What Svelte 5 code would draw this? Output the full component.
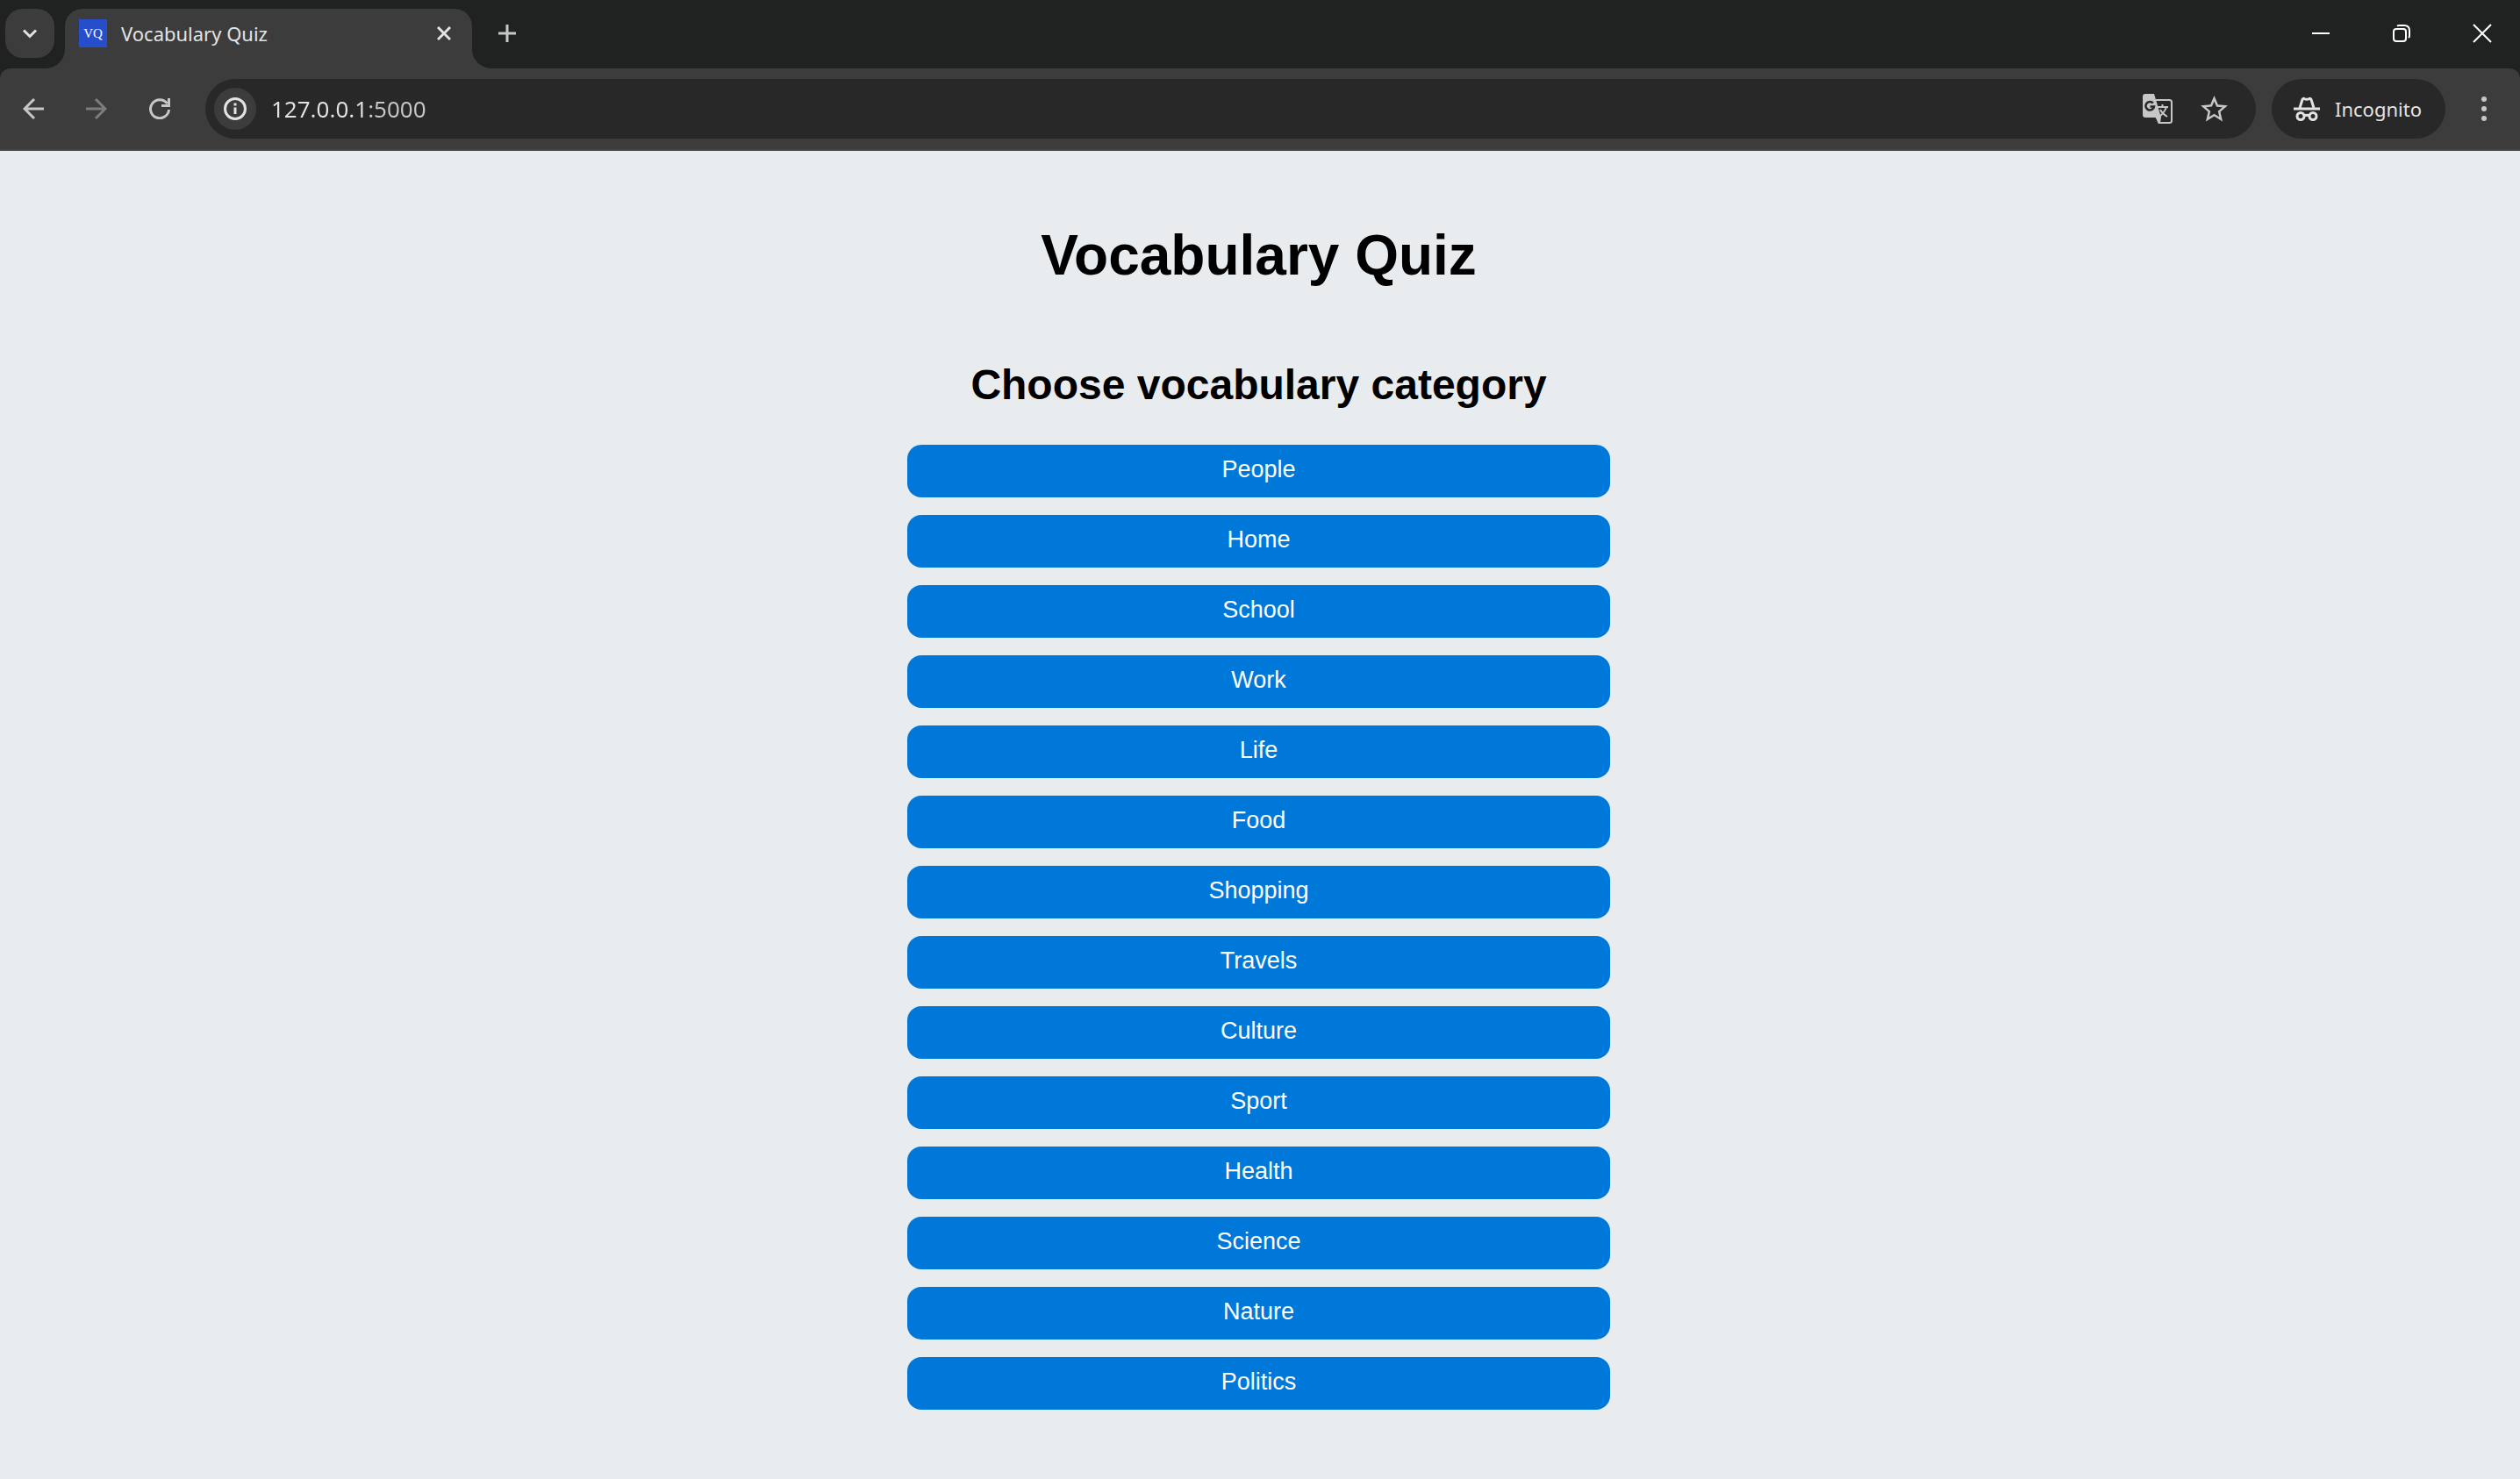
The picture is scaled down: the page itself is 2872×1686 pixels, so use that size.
<script>
  const categories = [
    'People', 'Home', 'School', 'Work', 'Life', 'Food', 'Shopping',
    'Travels', 'Culture', 'Sport', 'Health', 'Science', 'Nature', 'Politics',
  ];
</script>

<div class="window">
  <div class="chrome">
    <header class="tabs">
      <button class="search" aria-label="Search tabs">
        <svg width="20" height="20" viewBox="0 0 20 20"><path d="M3 6.5l7 7 7-7" fill="none" stroke="#e3e3e3" stroke-width="3" /></svg>
      </button>
      <div class="tab">
        <svg class="flare left" width="22" height="22" viewBox="0 0 22 22"><path d="M22 0A22 22 0 0 1 0 22H22Z" /></svg>
        <span class="favicon">VQ</span>
        <span class="tab-title">Vocabulary Quiz</span>
        <button class="close-tab" aria-label="Close tab">
          <svg width="16" height="16" viewBox="0 0 16 16"><path d="M1 1l14 14M15 1L1 15" stroke="#e3e3e3" stroke-width="3" /></svg>
        </button>
        <svg class="flare right" width="22" height="22" viewBox="0 0 22 22"><path d="M0 0A22 22 0 0 0 22 22H0Z" /></svg>
      </div>
      <button class="new-tab" aria-label="New tab">
        <svg width="20" height="20" viewBox="0 0 20 20"><path d="M10 0V20M0 10H20" stroke="#c7c7c7" stroke-width="3" /></svg>
      </button>
      <div class="controls">
        <button aria-label="Minimize"><svg width="22" height="22" viewBox="0 0 22 22"><path d="M1 11H21" stroke="#fff" stroke-width="2" /></svg></button>
        <button aria-label="Restore"><svg width="22" height="22" viewBox="0 0 22 22" fill="none" stroke="#fff" stroke-width="2"><rect x="2" y="6" width="14" height="14" rx="3" /><path d="M6 2.800Q7 2 8 2H14Q20 2 20 8V14Q20 15 19 16" /></svg></button>
        <button aria-label="Close"><svg width="22" height="22" viewBox="0 0 22 22"><path d="M1 1L21 21M21 1L1 21" stroke="#fff" stroke-width="2" /></svg></button>
      </div>
    </header>

    <nav class="toolbar">
      <button class="nav" aria-label="Back"><svg width="24" height="24" viewBox="0 0 24 24"><path d="M24 12H2M13 1L2 12l11 11" fill="none" stroke="#c7c7c7" stroke-width="3" /></svg></button>
      <button class="nav" aria-label="Forward"><svg width="24" height="24" viewBox="0 0 24 24"><path d="M0 12H22M11 1l11 11-11 11" fill="none" stroke="#7c7c7c" stroke-width="3" /></svg></button>
      <button class="nav" aria-label="Reload"><svg width="24" height="24" viewBox="0 0 24 24" fill="none" stroke="#c7c7c7" stroke-width="3"><path d="M22.500 13A10.500 10.500 0 1 1 20.500 6" /><path d="M22.500 0V8.500H14" /></svg></button>
      <div class="address">
        <button class="info" aria-label="View site information">
          <svg width="28" height="28" viewBox="0 0 28 28" fill="none" stroke="#e3e3e3" stroke-width="3"><circle cx="14" cy="14" r="11.500" /><path d="M14 12.500V20M14 7.500V10.500" /></svg>
        </button>
        <input class="url" type="text" aria-label="Address" value="127.0.0.1:5000" />
        <button aria-label="Translate this page">
          <svg width="34" height="34" viewBox="0 0 34 34">
            <path d="M15 7H30.500Q33 7 33 9.500V30.500Q33 33 30.500 33H18.500L15 25" fill="none" stroke="#c7c7c7" stroke-width="2" />
            <path d="M3 0H13L21 27H3Q0 27 0 24V3Q0 0 3 0Z" fill="#c7c7c7" />
            <path d="M14 26H21L20 33H19Z" fill="#c7c7c7" />
            <path d="M11.800 10.500A4.800 4.800 0 1 0 13 14.500H8.500" fill="none" stroke="#282828" stroke-width="2.600" />
            <path d="M17 15H29M22.500 12V15M27 15Q25 21 19 26M20 18Q22 22 28 26" fill="none" stroke="#c7c7c7" stroke-width="2" />
          </svg>
        </button>
        <button class="star" aria-label="Bookmark this tab">
          <svg width="37" height="37" viewBox="0 0 24 24"><path fill="#c7c7c7" fill-rule="evenodd" d="M22 9.240l-7.190-.620L12 2 9.190 8.630 2 9.240l5.460 4.730L5.820 21 12 17.270 18.180 21l-1.630-7.030L22 9.240zM12 15.400l-3.760 2.270 1-4.280-3.320-2.880 4.380-.380L12 6.100l1.710 4.040 4.380.380-3.320 2.880 1 4.280L12 15.400z" /></svg>
        </button>
      </div>
      <button class="incognito">
        <svg width="30" height="28" viewBox="0 0 30 28" fill="none" stroke="#e3e3e3" stroke-width="3"><path d="M0 14H30" /><path d="M7 13L10 3.500Q10.500 2 12 2.500Q15 4 18 2.500Q19.500 2 20 3.500L23 13" /><circle cx="8" cy="22.500" r="4" /><circle cx="22" cy="22.500" r="4" /><path d="M12 22Q15 20.500 18 22" /></svg>
        Incognito
      </button>
      <button class="menu" aria-label="Menu"><svg width="6" height="28" viewBox="0 0 6 28" fill="#c7c7c7"><circle cx="3" cy="3" r="3" /><circle cx="3" cy="14" r="3" /><circle cx="3" cy="25" r="3" /></svg></button>
    </nav>
  </div>

  <main>
    <h1>Vocabulary Quiz</h1>
    <h2>Choose vocabulary category</h2>
    <div class="categories">
      {#each categories as category}
        <button>{category}</button>
      {/each}
    </div>
  </main>
</div>

<style>
  :global(body) { background: #e8ecef; }
  .window { font-family: "Noto Sans", sans-serif; min-height: 100vh; }
  button { border: 0; padding: 0; margin: 0; background: none; font: inherit; color: inherit; }
  svg { display: block; flex: none; }
  .chrome { background: #202221; color: #e3e3e3; }
  .tabs { display: flex; height: 78px; padding-left: 6px; }
  .search { display: flex; align-items: center; justify-content: center; width: 56px; height: 56px; margin-top: 10px; border-radius: 20px; background: #3c3c3c; }
  .tab { position: relative; box-sizing: border-box; display: flex; align-items: center; width: 464px; height: 68px; margin: 10px 0 0 12px; padding: 0 24px 12px 16px; border-radius: 20px 20px 0 0; background: #3c3c3c; }
  .flare { position: absolute; bottom: 0; fill: #3c3c3c; }
  .left { right: 100%; }
  .right { left: 100%; }
  .favicon { width: 32px; height: 32px; background: #264ecb; color: #fff; font: 15px/32px "Liberation Serif", serif; text-align: center; }
  .tab-title { flex: 1; margin-left: 16px; font-size: 22px; line-height: 32px; }
  .new-tab { display: flex; align-items: center; height: 76px; margin-left: 30px; }
  .controls { display: flex; gap: 70px; height: 76px; margin-left: auto; padding-right: 32px; }
  .toolbar { box-sizing: border-box; display: flex; align-items: center; height: 94px; padding-left: 2px; background: #3c3c3c; border-bottom: 2px solid #474747; border-radius: 12px 12px 0 0; }
  .nav { display: flex; justify-content: center; width: 72px; }
  .address { flex: 1; display: flex; align-items: center; height: 68px; margin-left: 16px; border-radius: 34px; background: #282828; }
  .info { display: flex; align-items: center; justify-content: center; width: 48px; height: 48px; margin-left: 10px; border-radius: 24px; background: #3c3c3c; }
  /* The host is brighter than the port that follows it. */
  .url { flex: 1; min-width: 0; margin: 0 0 0 17px; padding: 0; border: 0; outline: 0; font: 26px/36px "Noto Sans", sans-serif; color: transparent; background: linear-gradient(90deg, #e3e3e3 109px, #c7c7c7 109px); background-clip: text; -webkit-background-clip: text; }
  .star { margin: 0 29px; }
  .incognito { display: flex; align-items: center; gap: 17px; box-sizing: border-box; width: 198px; height: 68px; margin-left: 18px; padding-left: 25px; border-radius: 34px; background: #282828; font-size: 22px; line-height: 32px; }
  .menu { display: flex; justify-content: center; width: 82px; margin-left: 3px; }
  main { padding: 79px 3px 79px 0; font-family: "Liberation Sans", Arial, sans-serif; color: #000; text-align: center; }
  h1 { margin: 0; font-size: 64px; line-height: 80px; }
  h2 { margin: 80px 0 0; font-size: 48px; line-height: 56px; }
  .categories { display: grid; gap: 20px; width: 801px; max-width: 100%; margin: 40px auto 0; }
  .categories button { height: 60px; padding-bottom: 4px; border-radius: 16px; background: #0078d9; color: #fff; font-size: 27px; line-height: 32px; }
</style>
